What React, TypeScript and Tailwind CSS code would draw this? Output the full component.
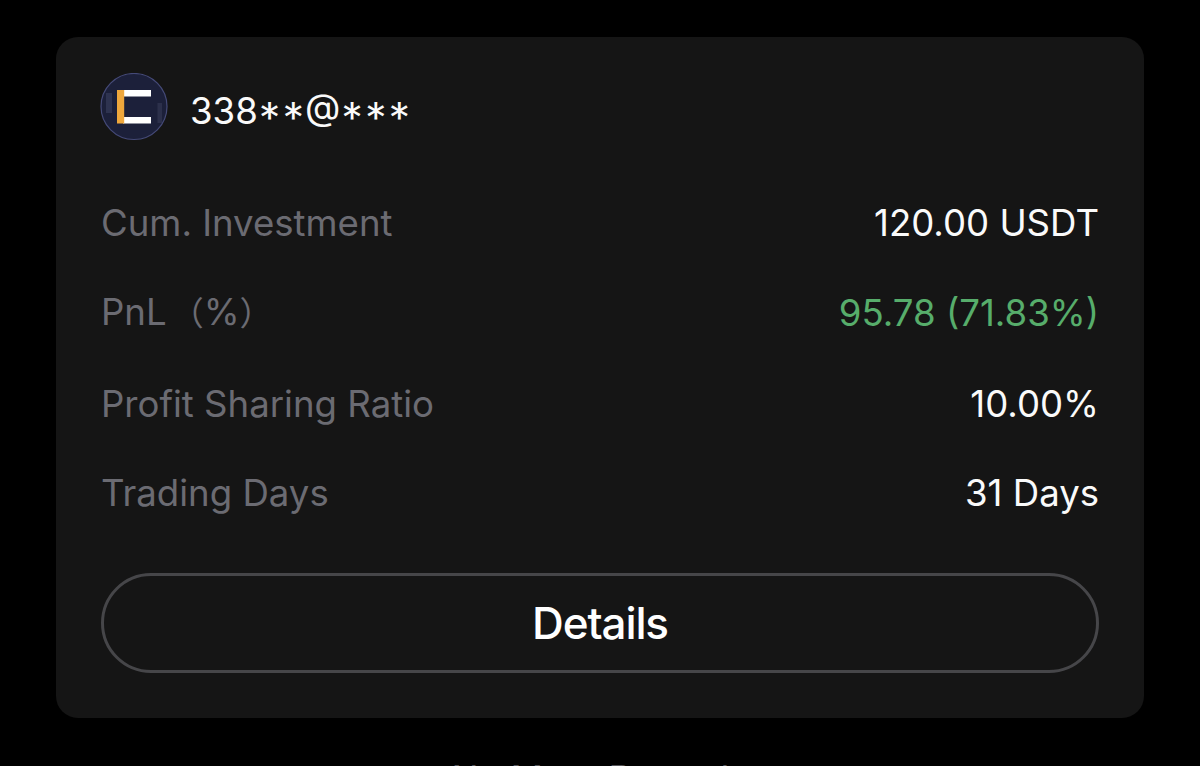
import React from 'react';

type Stat = {
  label: React.ReactNode;
  value: string;
  rowClass: string;
  labelClass?: string;
  valueClass: string;
};

const stats: Stat[] = [
  { label: 'Cum. Investment', value: '120.00 USDT', rowClass: 'h-[92px]', valueClass: 'text-[#fafafa]' },
  {
    label: (
      <>
        PnL<span className="ml-1 text-[33px]">（</span>%<span className="text-[33px]">）</span>
      </>
    ),
    value: '95.78 (71.83%)',
    rowClass: 'h-[88px]',
    labelClass: '-mt-0.5',
    valueClass: 'text-[#57ad6b]',
  },
  { label: 'Profit Sharing Ratio', value: '10.00%', rowClass: 'h-[94px]', valueClass: 'text-[#fafafa]' },
  { label: 'Trading Days', value: '31 Days', rowClass: 'h-[85px]', valueClass: 'text-[#fafafa]' },
];

function Avatar() {
  return (
    <svg width="68" height="68" viewBox="0 0 68 68" className="shrink-0">
      <circle cx="34" cy="33.5" r="33" fill="#1c203a" stroke="#454a78" strokeWidth="1.2" />
      <rect x="6" y="20" width="6" height="20" fill="#2e3350" />
      <rect x="57.5" y="30" width="4.5" height="20" fill="#2c304b" />
      <path d="M23 17h28v6.5H23zM23 44h28v6.5H23z" fill="#fff" />
      <rect x="17" y="17" width="7.2" height="33.5" fill="#efa73c" />
    </svg>
  );
}

function StatRow({ label, value, rowClass, labelClass = '', valueClass }: Stat) {
  return (
    <div className={`flex items-center justify-between whitespace-nowrap text-[36.6px] leading-none ${rowClass}`}>
      <span className={`text-[#6b6b72] ${labelClass}`}>{label}</span>
      <span className={valueClass}>{value}</span>
    </div>
  );
}

export default function App() {
  return (
    <div className="h-[766px] w-full overflow-hidden bg-black px-14 pt-[37px] font-['Inter','Noto_Sans_CJK_SC',sans-serif]">
      <div className="h-[681px] rounded-[22px] bg-[#151515] pl-[44px] pr-[45px] pt-[36px]">
        <div className="flex h-[68px] items-center gap-[22px]">
          <Avatar />
          <span className="pt-[8px] text-[36.6px] leading-none text-[#fafafa] [font-feature-settings:'case']">
            338**@***
          </span>
        </div>

        <div className="mt-[36px] pl-px">
          {stats.map((s, i) => (
            <StatRow key={i} {...s} />
          ))}
        </div>

        <div className="mt-[37px] pl-px">
          <button className="flex h-[100px] w-full items-center justify-center rounded-full border-[3px] border-[#464649] text-[44px] font-medium leading-none tracking-[-1.1px] text-white">
            Details
          </button>
        </div>
      </div>

      <p className="mt-[40px] text-center text-[36px] leading-[40px] text-[#55555a]">No More Records</p>
    </div>
  );
}
